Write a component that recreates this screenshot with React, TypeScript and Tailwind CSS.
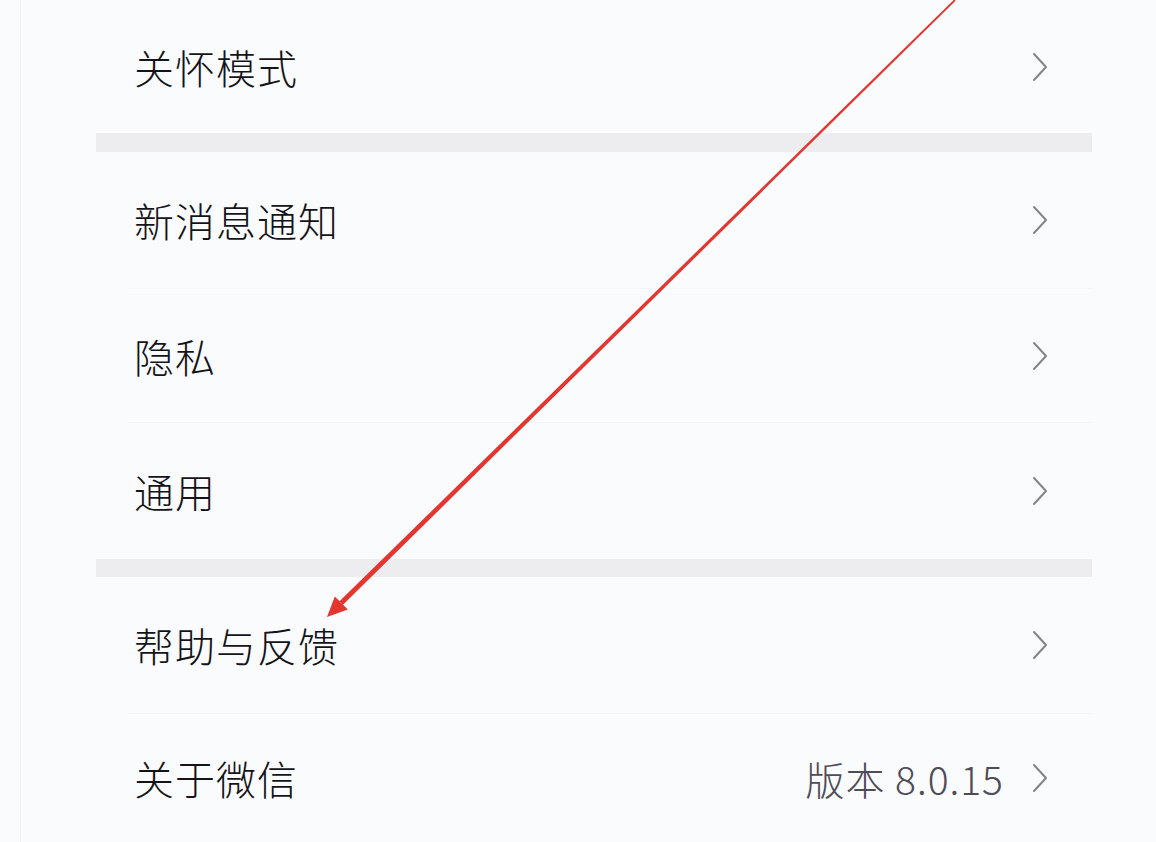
const font = { fontFamily: '"Noto Sans CJK SC", "Noto Sans", sans-serif' };

type Row = { label: string; h: string; extra?: string; divider?: boolean };

function Chevron() {
  return (
    <svg width="16" height="30" viewBox="0 0 16 30" fill="none" className="shrink-0">
      <polyline points="2,2 14,15 2,28" stroke="#838388" strokeWidth="2" strokeLinecap="round" strokeLinejoin="round" />
    </svg>
  );
}

function Item({ label, h, extra, divider }: Row) {
  return (
    <div>
      {divider && <div className="ml-[32px] h-px bg-[#f4f5f8]" />}
      <div className={`flex items-center pl-[38px] pr-[44px] ${h}`}>
        <span className="flex-1 text-[40px] font-light leading-none text-[#141318] tracking-[1px]">{label}</span>
        {extra && (
          <span className="mr-[28px] text-[39px] font-light leading-none tracking-[1px] text-[#4f4b57]" style={{ fontFamily: '"Noto Sans CJK SC", "Open Sans", sans-serif' }}>
            {extra}
          </span>
        )}
        <Chevron />
      </div>
    </div>
  );
}

function Band({ h }: { h: string }) {
  return <div className={`${h} bg-[#ededf0]`} />;
}

export default function App() {
  return (
    <div className="relative w-[1156px] h-[842px] overflow-hidden bg-[#fafbfd]" style={font}>
      <div className="flex h-full">
        <div className="w-[20px] shrink-0" />
        <div className="w-px shrink-0 bg-[#f2f3f6]" />
        <div className="ml-[75px] w-[996px] flex flex-col">
          <Item label="关怀模式" h="h-[133px]" />
          <Band h="h-[20px]" />
          <Item label="新消息通知" h="h-[136px]" />
          <Item label="隐私" h="h-[133px]" divider />
          <Item label="通用" h="h-[136px]" divider />
          <Band h="h-[18px]" />
          <Item label="帮助与反馈" h="h-[136px]" />
          <Item label="关于微信" h="h-[128px]" extra="版本 8.0.15" divider />
        </div>
      </div>

      {/* red annotation arrow */}
      <svg className="absolute inset-0 pointer-events-none" width="1156" height="842" viewBox="0 0 1156 842">
        <polygon points="954.4,-0.7 955.6,0.7 343.0,604.8 339.5,601.2" fill="#e4352f" />
        <polygon points="327,617 347.8,609.6 334.8,596.4" fill="#e4352f" />
      </svg>
    </div>
  );
}
